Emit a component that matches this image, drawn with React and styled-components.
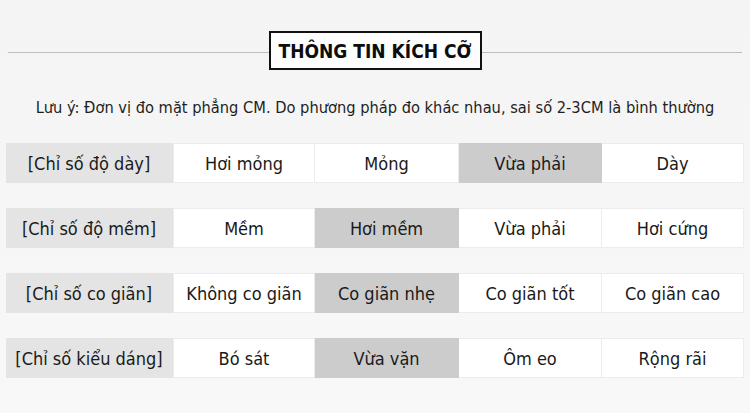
import React from "react";
import styled, { createGlobalStyle } from "styled-components";

const Global = createGlobalStyle`
  html, body { margin: 0; padding: 0; background: #f6f6f6; }
  body { font-family: "DejaVu Sans Condensed", "DejaVu Sans", sans-serif; color: #1a1a1a; }
`;

const Page = styled.div`
  width: 750px;
  height: 413px;
  box-sizing: border-box;
  padding: 31px 6px 0 6px;
  background: linear-gradient(#f4f4f4, #f8f8f8);
  display: flex;
  flex-direction: column;
  overflow: hidden;
`;

const Header = styled.div`
  display: flex;
  align-items: center;
  padding: 0 2px;
`;

const Rule = styled.div`
  flex: 1;
  height: 1px;
  background: #bdbdbd;
  margin-top: 4px;
`;

const TitleBox = styled.div`
  width: 209px;
  height: 35px;
  border: 2px solid #111;
  background: #fdfdfd;
  display: flex;
  align-items: center;
  justify-content: center;
  font-weight: bold;
  font-size: 19px;
  color: #0d0d0d;
`;

const Note = styled.p`
  margin: 23px 0 0 0;
  text-align: center;
  font-size: 16.3px;
  line-height: 30px;
  color: #1e1e1e;
`;

const Rows = styled.div`
  margin-top: 20px;
  display: flex;
  flex-direction: column;
  gap: 25px;
`;

const Row = styled.div`
  display: grid;
  grid-template-columns: 167px 142px 144px 143px 142px;
  height: 40px;
`;

const Cell = styled.div`
  display: flex;
  align-items: center;
  justify-content: center;
  font-size: 18px;
  color: #1a1a1a;
  box-sizing: border-box;
  background: ${(p) => (p.$kind === "label" ? "#e4e4e4" : p.$kind === "on" ? "#cccccc" : "#ffffff")};
  border: 1px solid ${(p) => (p.$kind === "off" ? "#ececec" : "transparent")};
  border-left-width: ${(p) => (p.$first ? "1px" : "0")};
`;

const data = [
  ["[Chỉ số độ dày]", ["Hơi mỏng", "Mỏng", "Vừa phải", "Dày"], 2],
  ["[Chỉ số độ mềm]", ["Mềm", "Hơi mềm", "Vừa phải", "Hơi cứng"], 1],
  ["[Chỉ số co giãn]", ["Không co giãn", "Co giãn nhẹ", "Co giãn tốt", "Co giãn cao"], 1],
  ["[Chỉ số kiểu dáng]", ["Bó sát", "Vừa vặn", "Ôm eo", "Rộng rãi"], 1],
];

export default function App() {
  return (
    <Page>
      <Global />
      <Header>
        <Rule />
        <TitleBox>THÔNG TIN KÍCH CỠ</TitleBox>
        <Rule />
      </Header>
      <Note>Lưu ý: Đơn vị đo mặt phẳng CM. Do phương pháp đo khác nhau, sai số 2-3CM là bình thường</Note>
      <Rows>
        {data.map(([label, items, sel]) => (
          <Row key={label}>
            <Cell $kind="label">{label}</Cell>
            {items.map((t, i) => (
              <Cell key={t} $kind={i === sel ? "on" : "off"} $first={i === 0}>
                {t}
              </Cell>
            ))}
          </Row>
        ))}
      </Rows>
    </Page>
  );
}
